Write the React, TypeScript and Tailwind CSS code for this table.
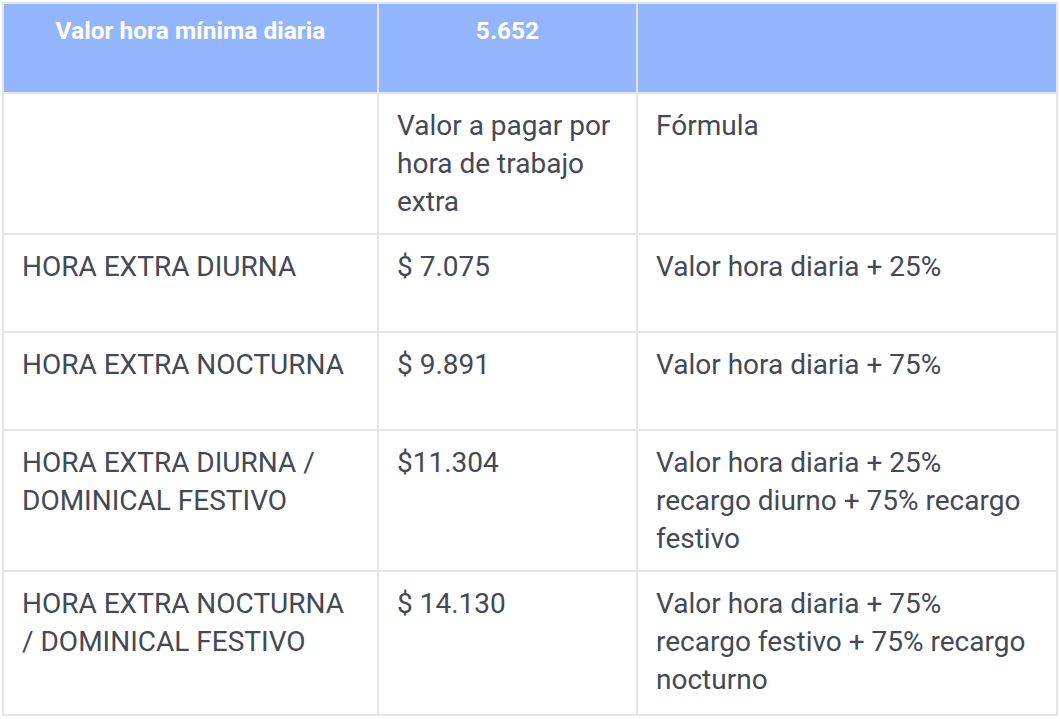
const rows = [
  { label: ["HORA EXTRA DIURNA"], value: "$ 7.075", formula: ["Valor hora diaria + 25%"], h: "h-[98px]" },
  { label: ["HORA EXTRA NOCTURNA"], value: "$ 9.891", formula: ["Valor hora diaria + 75%"], h: "h-[98px]" },
  {
    label: ["HORA EXTRA DIURNA /", "DOMINICAL FESTIVO"],
    value: "$11.304",
    formula: ["Valor hora diaria + 25%", "recargo diurno + 75% recargo", "festivo"],
    h: "",
  },
  {
    label: ["HORA EXTRA NOCTURNA", "/ DOMINICAL FESTIVO"],
    value: "$ 14.130",
    formula: ["Valor hora diaria + 75%", "recargo festivo + 75% recargo", "nocturno"],
    h: "h-[144px]",
  },
];

const cell = "border-2 border-[#e3e5e9] align-top pl-[18px] pr-3 pt-[13px] pb-[12px]";

export default function App() {
  return (
    <div className="min-h-[719px] w-[1060px] bg-white pl-[2px] pt-[2px] font-['Roboto',sans-serif] text-[28px] leading-[38px] text-[#434955]">
      <table className="w-[1056px] table-fixed border-collapse">
        <colgroup>
          <col className="w-[375px]" />
          <col className="w-[259px]" />
          <col />
        </colgroup>
        <thead>
          <tr className="h-[90px] bg-[#93b5fd] text-[24.5px] font-bold text-white">
            <th className="border-2 border-[#e3e5e9] pt-[8px] text-center align-top">
              Valor hora mínima diaria
            </th>
            <th className="border-2 border-[#e3e5e9] pt-[8px] text-center align-top">5.652</th>
            <th className="border-2 border-[#e3e5e9]" />
          </tr>
        </thead>
        <tbody>
          <tr>
            <td className={cell} />
            <td className={cell}>Valor a pagar por hora de trabajo extra</td>
            <td className={cell}>Fórmula</td>
          </tr>
          {rows.map((r) => (
            <tr key={r.value} className={r.h}>
              <td className={cell}>
                {r.label.map((l) => (
                  <div key={l}>{l}</div>
                ))}
              </td>
              <td className={cell}>{r.value}</td>
              <td className={cell}>
                {r.formula.map((l) => (
                  <div key={l} className="whitespace-nowrap">
                    {l}
                  </div>
                ))}
              </td>
            </tr>
          ))}
        </tbody>
      </table>
    </div>
  );
}
